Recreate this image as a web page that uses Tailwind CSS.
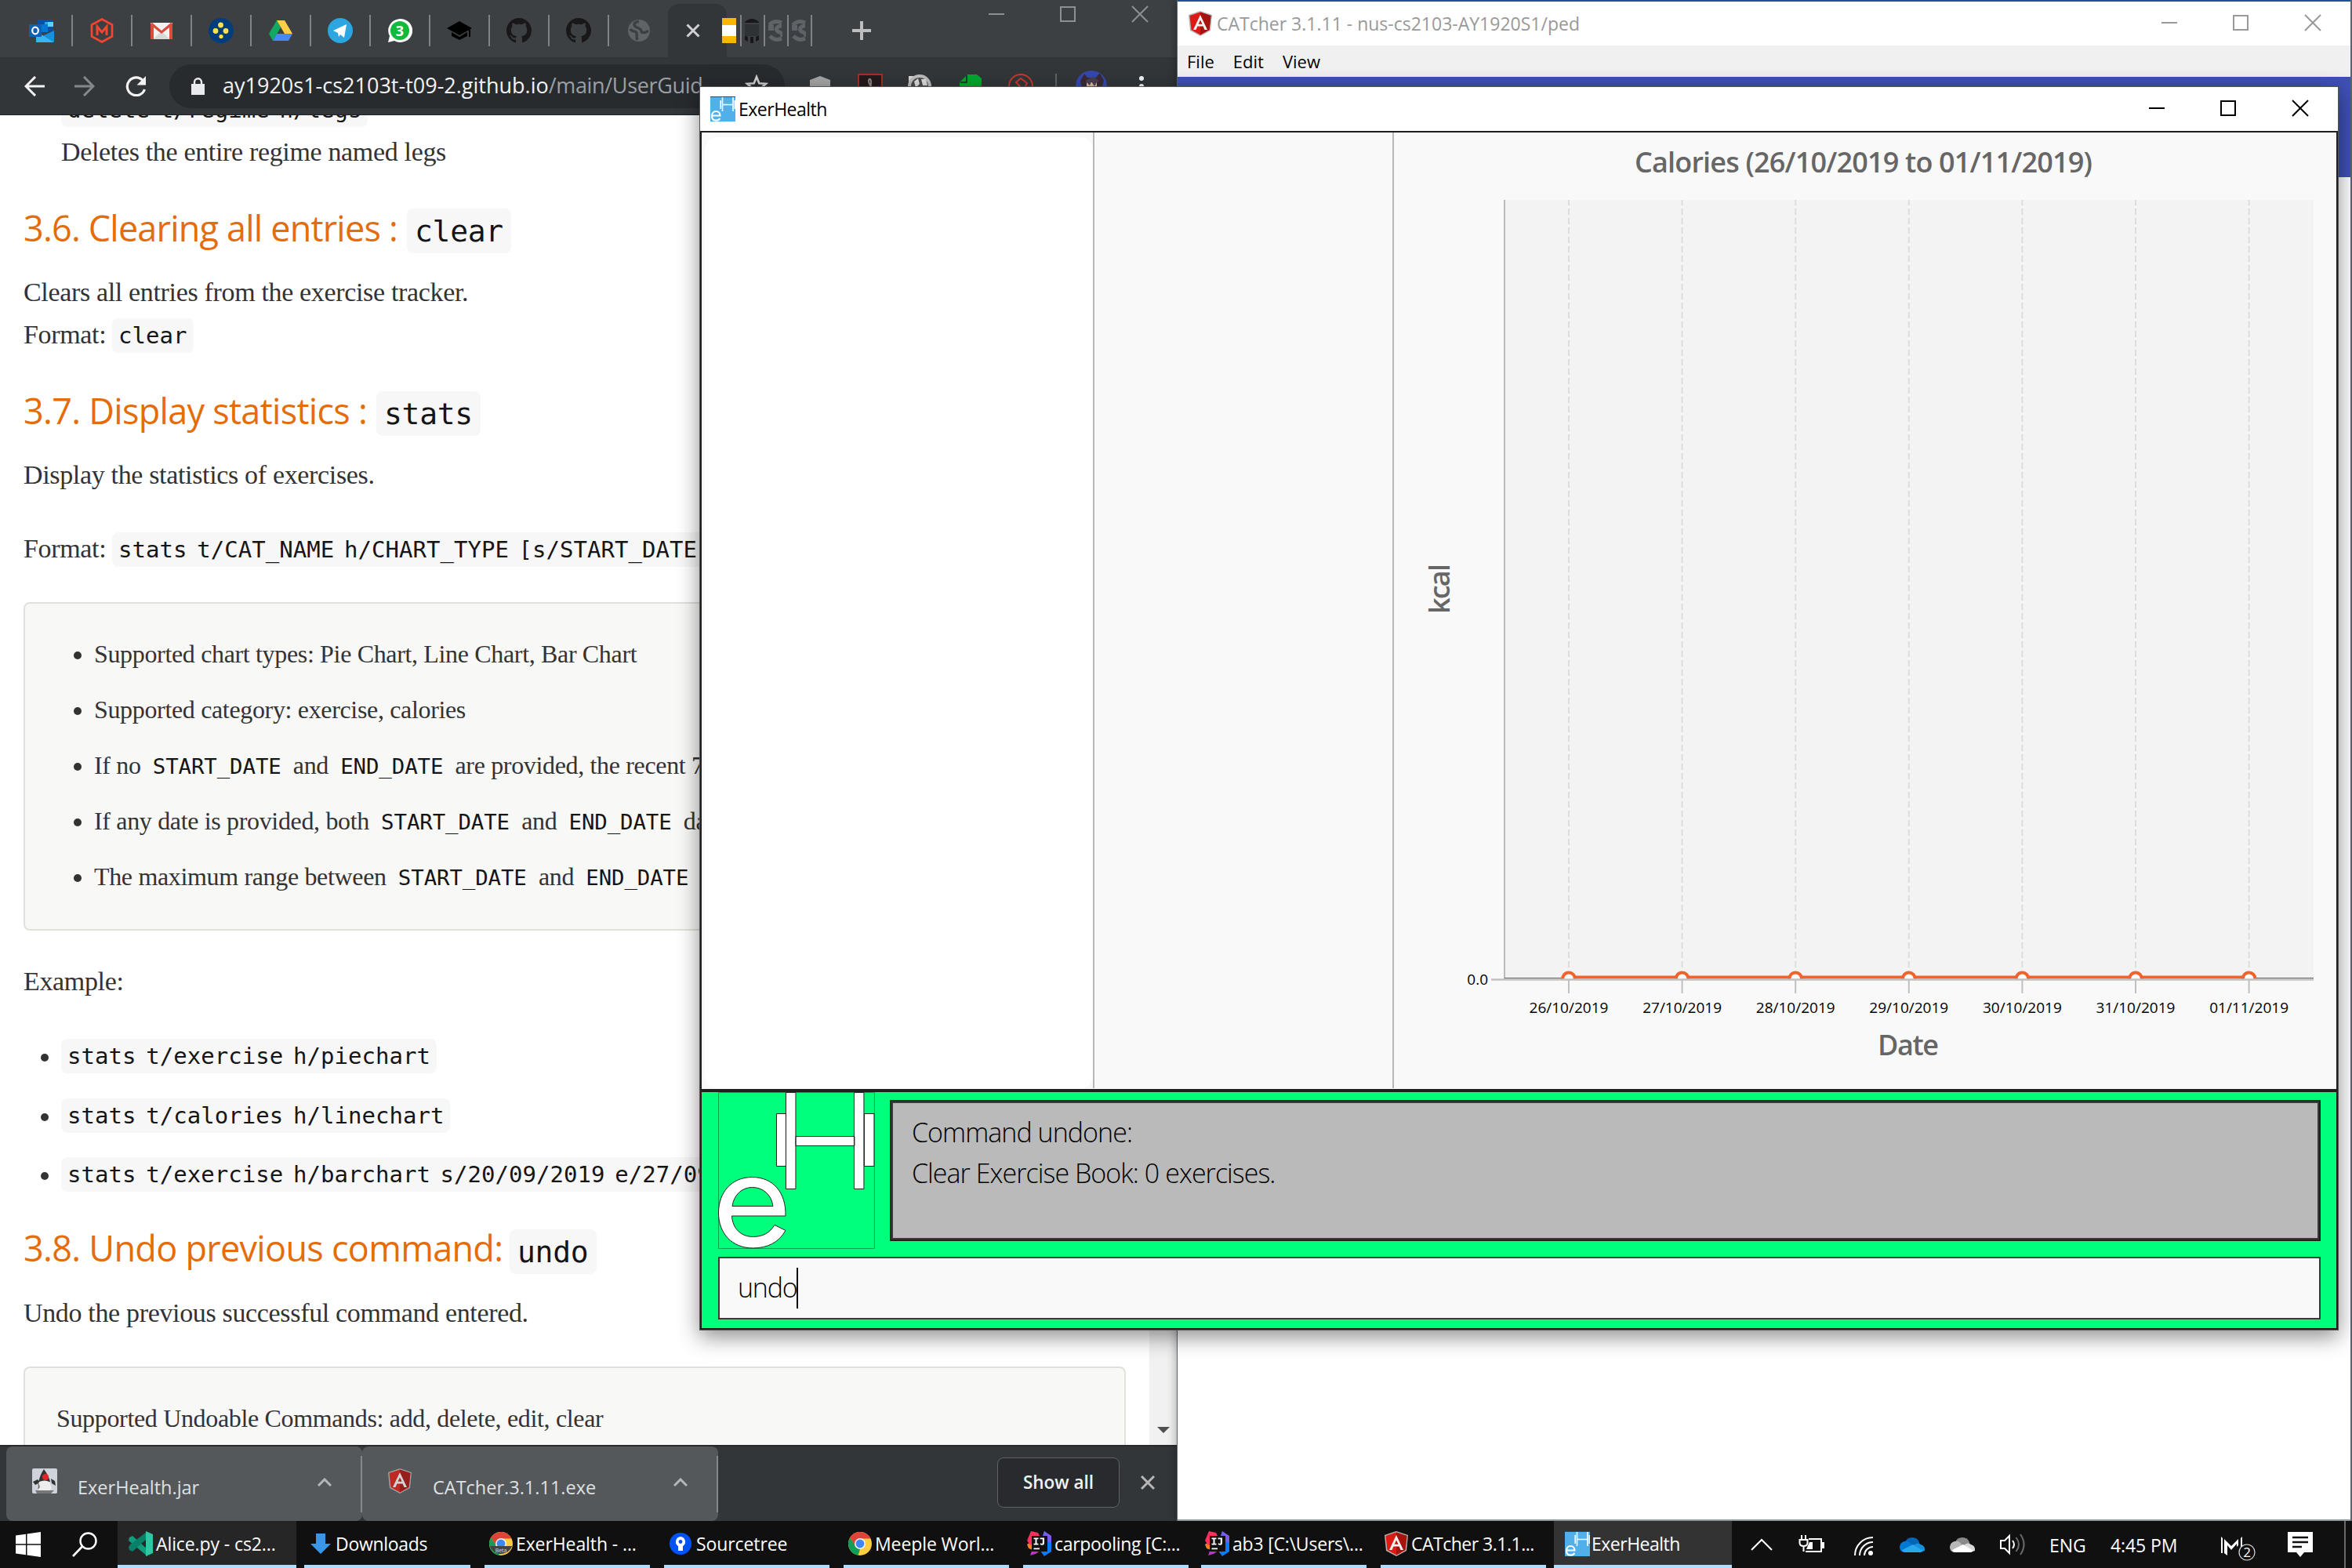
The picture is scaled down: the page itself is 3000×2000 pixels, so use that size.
<!DOCTYPE html>
<html lang="en">
<head>
<meta charset="utf-8">
<title>Desktop</title>
<script src="https://cdn.jsdelivr.net/npm/@tailwindcss/browser@4"></script>
</head>
<body class="relative w-[3000px] h-[2000px] overflow-hidden bg-[#3c4043] font-['Open_Sans',sans-serif] text-[23px] leading-none whitespace-nowrap">

<svg class="hidden">
  <symbol id="angular" viewBox="0 0 32 32"><path fill="#b3b3b3" d="M16 0 31 5 29 25 16 32 3 25 1 5z"/><path fill="#dd1b16" d="M16 1.500 29.500 6 27.500 24 16 30.500 4.500 24 2.500 6z"/><path fill="#a6120d" d="M16 1.500 29.500 6 27.500 24 16 30.500z"/><path fill="#f2f2f2" d="M16 5 7 24h3.500l1.900-4.600h7.200l1.900 4.600H25zm0 6.500 2.500 5.300h-5z"/></symbol>
  <symbol id="github" viewBox="0 0 16 16"><path d="M8 0C3.580 0 0 3.580 0 8c0 3.540 2.290 6.530 5.470 7.590.4.070.55-.17.55-.38 0-.19-.01-.82-.01-1.490-2.010.37-2.530-.49-2.690-.94-.09-.23-.48-.94-.82-1.130-.28-.15-.68-.52-.01-.53.63-.01 1.080.58 1.230.82.72 1.210 1.870.87 2.330.66.070-.52.28-.87.51-1.070-1.780-.2-3.640-.89-3.640-3.950 0-.87.31-1.590.82-2.150-.08-.2-.36-1.020.080-2.120 0 0 .67-.21 2.200.82.64-.18 1.320-.27 2-.27s1.360.09 2 .27c1.530-1.040 2.200-.82 2.200-.82.44 1.100.16 1.920.080 2.120.51.56.82 1.270.82 2.150 0 3.070-1.870 3.750-3.650 3.950.29.25.54.73.54 1.480 0 1.070-.01 1.930-.01 2.200 0 .21.15.46.55.38A8 8 0 0 0 16 8c0-4.420-3.580-8-8-8z"/></symbol>
  <symbol id="globe" viewBox="0 0 28 28"><circle cx="14" cy="14" r="14" fill="#5f6368"/><path fill="none" stroke="#3c4043" stroke-width="3.500" d="M14 2.500c-6 0-7 4-5 6s5 2 7 4 0 4 3 4 6-1 6-3M3 12c2 4 7 2 8 5s-1 5 1 9"/></symbol>
  <symbol id="halfglobe" viewBox="0 0 18 28"><path fill="none" stroke="#5f6368" stroke-width="5" d="M1 7q7-7 16-3M17 8c-5 0-9 4-5 7 4 2 6 2 6 7M2 21q7 7 15 3"/><path fill="#5f6368" d="M0 7h7v7H0z"/></symbol>
  <symbol id="exer" viewBox="0 0 32 32"><path fill="#51b0ea" d="M0 0h32v32H0z"/><path fill="#1d4f70" d="M0 0h32v1H0z"/><path fill="none" stroke="#fff" stroke-width="1.600" d="M15.500 1v18M29 1v18M15.500 10.500H29M13.200 5v11M31.300 5v11"/><path fill="none" stroke="#fff" stroke-width="2.200" d="M2 24.500h10.500c0-3-2-5.500-5.200-5.500S2 21.500 2 25s2 5.700 5.300 5.700c2.300 0 4-1 5-2.700"/></symbol>
  <symbol id="chrome" viewBox="0 0 30 30"><circle cx="15" cy="15" r="15" fill="#ffcd40"/><path fill="#db4437" d="M15 0A15 15 0 0 1 28.500 8.500H15L9 18.500 2.200 7.200A15 15 0 0 1 15 0z"/><path fill="#0f9d58" d="M2.200 7.200 9.300 18.500 15 22l-2.500 7.800A15 15 0 0 1 2.200 7.200z"/><circle cx="15" cy="15" r="7" fill="#f1f1f1"/><circle cx="15" cy="15" r="5.400" fill="#4285f4"/></symbol>
  <symbol id="idea" viewBox="0 0 32 32"><path fill="#fc801d" d="M0 17l6-4 4 12-8-3z"/><path fill="#fe315d" d="M5 0l9 2 4 8L4 18 0 12z"/><path fill="#087cfa" d="M22 0l9 8v18l-9 6-6-8 4-18z"/><path fill="#7b5cf0" d="M22 0l9 6v9l-12-5z"/><path fill="#b735c9" d="M4 31l3-9h14l-10 7z"/><path fill="#111" d="M6 6h20v20H6z"/><path fill="#fff" d="M8.500 8.500h6v1.800h-2v5.400h2v1.800h-6v-1.800h2v-5.400h-2zM16.500 8.500h5.500v7q0 2.200-2.500 2.200-2 0-3-1.200l1.100-1.300q1.700 1.400 2.200 0v-4.900h-3.300zM8.500 21.500H16v1.700H8.500z"/></symbol>
  <symbol id="wincontrols" viewBox="0 0 206 22"><path fill="none" stroke="currentColor" stroke-width="2" d="M1 11h20M93 2h18v18H93zM184 1l20 20M204 1l-20 20"/></symbol>
</svg>

<!-- Browser window -->
<section class="absolute left-0 top-0 w-[1501px] h-[1940px] flex flex-col bg-white overflow-hidden">
  <div class="h-[73px] shrink-0 bg-[#3c4043] flex relative">
    <div class="flex items-center h-[78px] pl-[17px]">
      <div class="w-[76px] h-10 border-r-2 border-[#808386] flex items-center justify-center pr-0.5"><svg class="w-8 h-8" viewBox="0 0 32 32"><path fill="#0a4fa0" d="M11 2h20v15H11z"/><path fill="#28a8ea" d="M20 5h11v6H20z"/><path fill="#50d9ff" d="M24 5h7v6h-7z"/><path fill="#0078d4" d="M14 8h10v10H14z"/><path fill="#1490df" d="M32 16v14H9l10-8z"/><path fill="#35b8f1" d="M9 17l23 14H9z"/><path fill="#0f5fb5" d="M0 8h16v16H0z"/><ellipse cx="8" cy="16" rx="3.800" ry="4.300" fill="none" stroke="#fff" stroke-width="2.200"/></svg></div>
      <div class="w-[76px] h-10 border-r-2 border-[#808386] flex items-center justify-center"><svg class="w-8 h-8" viewBox="0 0 32 32"><path fill="none" stroke="#f8452f" stroke-width="2.600" d="M16 1.500 29 8.500v15L16 30.500 3 23.500v-15z"/><path fill="none" stroke="#f8452f" stroke-width="3" d="M10 22V11l6 7 6-7v11"/></svg></div>
      <div class="w-[76px] h-10 border-r-2 border-[#808386] flex items-center justify-center"><svg class="w-[28px] h-8" viewBox="0 0 28 32"><path fill="#f2f2f2" d="M0 6h28v21H0z"/><path fill="#d8d8d8" d="M3 27 14 17l11 10z"/><path fill="#dc4b3e" d="M0 8q0-2 2-2l12 10L26 6q2 0 2 2v19h-4V12L14 20 4 12v15H0z"/></svg></div>
      <div class="w-[76px] h-10 border-r-2 border-[#808386] flex items-center justify-center"><svg class="w-8 h-8" viewBox="0 0 32 32"><circle cx="16" cy="16" r="16" fill="#003d7c"/><g fill="#ffe14d"><circle cx="15.500" cy="9" r="3.400"/><circle cx="9" cy="16.500" r="3.400"/><circle cx="22" cy="16.500" r="3.400"/><circle cx="16" cy="23.500" r="2.600"/></g></svg></div>
      <div class="w-[76px] h-10 border-r-2 border-[#808386] flex items-center justify-center"><svg class="w-[30px] h-8" viewBox="0 0 30 32"><path fill="#11a861" d="M10 3 0 20l5 9 10-17z"/><path fill="#ffcf48" d="M10 3h10l10 17H20z"/><path fill="#4688f4" d="M10 20h20l-5 9H5z"/></svg></div>
      <div class="w-[76px] h-10 border-r-2 border-[#808386] flex items-center justify-center"><svg class="w-8 h-8" viewBox="0 0 32 32"><circle cx="16" cy="16" r="16" fill="#2ca5e0"/><path fill="#fff" d="M7 16 24 8l-3 17-5-4-2 3-1-5z"/></svg></div>
      <div class="w-[76px] h-10 border-r-2 border-[#808386] flex items-center justify-center relative"><svg class="w-8 h-8" viewBox="0 0 32 32"><path fill="#fff" d="M1 31l2-8a15.500 15 0 1 1 6 6z"/><circle cx="16" cy="16" r="12" fill="#12b93c"/></svg><span class="absolute inset-0 flex items-center justify-center text-white text-[18px] font-bold">3</span></div>
      <div class="w-[76px] h-10 border-r-2 border-[#808386] flex items-center justify-center"><svg class="w-8 h-8" viewBox="0 0 32 32"><path fill="#000" d="M16 4 32 13 16 22 0 13zM6 18l10 6 10-6v5L16 28 6 23zM28 15h2v9h-2z"/></svg></div>
      <div class="w-[76px] h-10 border-r-2 border-[#808386] flex items-center justify-center"><svg class="w-8 h-8 fill-[#191717]"><use href="#github"/></svg></div>
      <div class="w-[76px] h-10 border-r-2 border-[#808386] flex items-center justify-center"><svg class="w-8 h-8 fill-[#191717]"><use href="#github"/></svg></div>
      <div class="w-[75px] h-10 flex items-center justify-center"><svg class="w-7 h-7"><use href="#globe"/></svg></div>
    </div>
    <div class="w-[75px] mt-[5px] h-[68px] bg-[#323639] rounded-t-[14px] flex justify-center"><svg class="w-[18px] h-[18px] mt-[25px] ml-[-12px]" viewBox="0 0 18 18"><path stroke="#cfd1d3" stroke-width="3" d="M1.500 1.500l15 15M16.500 1.500l-15 15"/></svg></div>
    <div class="flex items-center h-[78px] ml-[-6px] gap-[6px]">
      <div class="w-[18px] h-8 bg-[#f9b700] py-[9px]"><div class="h-[14px] bg-white"></div></div><div class="w-0.5 h-10 bg-[#808386] -mx-px mr-[-2px]"></div>
      <svg class="w-[18px] h-8 fill-[#191717]" viewBox="3.500 0 9 16" preserveAspectRatio="none"><path d="M3.500 2.500Q8-1.500 12.500 2.500V3h-9zM3.500 11l2 1v3l-2-1zM7 12h2v4H7zM10.500 12l2-1v3l-2 1z"/><path fill="#2f3235" d="M3.500 4h9v6l-1 1.500h-7l-1-1.500z"/></svg><div class="w-0.5 h-10 bg-[#808386] mr-[-2px]"></div>
      <svg class="w-[18px] h-7"><use href="#halfglobe"/></svg><div class="w-0.5 h-10 bg-[#808386] mr-[-2px]"></div>
      <svg class="w-[18px] h-7"><use href="#halfglobe"/></svg><div class="w-0.5 h-10 bg-[#808386]"></div>
      <svg class="w-6 h-6 ml-[45px]" viewBox="0 0 24 24"><path stroke="#bcbec0" stroke-width="4" d="M12 0v24M0 12h24"/></svg>
    </div>
    <svg class="absolute left-[1260px] top-[7px] w-[206px] h-[22px] text-[#8d9092]"><use href="#wincontrols"/></svg>
  </div>

  <div class="h-[73px] shrink-0 bg-[#323639] flex items-center">
    <svg class="w-[26px] h-[26px] ml-[31px]" viewBox="0 0 26 26"><path fill="none" stroke="#f1f3f4" stroke-width="3" d="M26 13H2M14 1 2 13l12 12"/></svg>
    <svg class="w-[26px] h-[26px] ml-[38px]" viewBox="0 0 26 26"><path fill="none" stroke="#85888b" stroke-width="3" d="M0 13h24M12 1l12 12-12 12"/></svg>
    <svg class="w-[28px] h-[26px] ml-[38px]" viewBox="0 0 28 26"><path fill="none" stroke="#f1f3f4" stroke-width="3.200" d="M23.500 6A11.400 11.400 0 1 0 25.500 17"/><path fill="#f1f3f4" d="M27 0v11.500H15.500z"/></svg>
    <div class="ml-[29px] w-[785px] h-14 rounded-full bg-[#282b2e] flex items-center shrink-0">
      <svg class="w-[17px] h-[22px] ml-[28px]" viewBox="0 0 17 22"><path fill="#e8eaed" d="M0 8h17v14H0z"/><path fill="none" stroke="#e8eaed" stroke-width="2.400" d="M4 9V5.500a4.500 4.200 0 0 1 9 0V9"/></svg>
      <div class="ml-[23px] -mt-0.5 w-[650px] text-[27px] text-[#9aa0a6]"><span class="text-[#f1f3f4]">ay1920s1-cs2103t-t09-2.github.io</span><span class="tracking-[-0.35px]">/main/UserGuid</span></div>
      <svg class="w-[30px] h-[30px] ml-[16px] shrink-0" viewBox="0 0 30 30"><path fill="none" stroke="#cfd1d3" stroke-width="2.600" d="M15 3l3.300 8.200 8.700.6-6.700 5.600 2.200 8.600-7.500-4.700L7.500 26l2.200-8.600L3 11.800l8.700-.6z"/></svg>
    </div>
    <svg class="w-[480px] h-[56px] shrink-0" viewBox="1001 81 480 56"><path fill="#a6a6a6" d="M1033 101l13-5 13 5v18h-26z"/><path fill="#241a1c" stroke="#a3301f" stroke-width="2" d="M1095 94h30v30h-30z"/><path fill="none" stroke="#8b8183" stroke-width="2" d="M1108 114c5-8 3-15 1-14s-1 8 5 12"/><path fill="#d8d8d8" d="M1159 96h18l10 10v10h-28z"/><circle cx="1173" cy="109" r="15" fill="#bdbdbd"/><circle cx="1173" cy="109" r="11" fill="#4a4a4a"/><path fill="#ddd" d="M1166 103l5-4 2 7-5 5zM1175 100h6l2 8h-6z"/><path fill="#00a82d" d="M1224 104l10-10h12l6 5v20h-28z"/><path stroke="#222" stroke-width="1.500" fill="none" d="M1225 104h8v-9"/><circle cx="1302" cy="109" r="15" fill="none" stroke="#c9392b" stroke-width="2"/><path fill="none" stroke="#c9392b" stroke-width="2" d="M1292 116l8-8-4-4 6-5 8 6-4 8M1300 108l6 6"/><path fill="#5f6368" d="M1346 93h2v30h-2z"/><circle cx="1392" cy="109" r="20" fill="#3448ae"/><path fill="#3b2a35" d="M1378 102l5-9 4 5h11l5-6 5 10-6 20h-20z"/><path fill="#e0b9a4" d="M1386 104h13v12h-13z"/><path fill="#4a4150" d="M1384 102l6 6 2-5 4 6 3-5 3-2-8-5z"/><circle cx="1456" cy="99" r="3" fill="#f1f3f4"/><circle cx="1456" cy="109" r="3" fill="#f1f3f4"/></svg>
  </div>

  <div class="h-[1697px] shrink-0 border-t border-[#202124] flex overflow-hidden">
    <article class="w-[1466px] pl-[30px] font-['Liberation_Serif',serif] text-[34px] tracking-[-0.34px] leading-[54px] text-[#333] [&_code]:font-['DejaVu_Sans_Mono',monospace] [&_code]:text-[#151515] overflow-hidden">
      <div class="flex items-center h-[54px] -mt-[35px]"><i class="w-[10px] h-[10px] ml-[22px] mr-4 rounded-full bg-[#333]"></i><code class="h-11 leading-[44px] mt-0.5 px-2 rounded-lg bg-[#f7f7f8] text-[29px] tracking-[0.04px] [word-spacing:-4.8px]">delete t/regime h/legs</code></div>
      <p class="mt-px pl-12">Deletes the entire regime named legs</p>
      <h3 class="flex h-16 leading-[64px] mt-[38px] font-['Open_Sans',sans-serif] text-[45px] tracking-[-0.8px] text-[#e46c0a]"><span class="w-[489px]">3.6. Clearing all entries :</span><code class="mt-[7px] h-[57px] w-[133px] leading-[58px] px-[10px] rounded-lg bg-[#f7f7f8] text-[38px] tracking-[-0.3px]">clear</code></h3>
      <p class="mt-[23px]">Clears all entries from the exercise tracker.</p>
      <p class="flex items-center h-[54px]"><span class="w-[113px]">Format:</span><code class="h-11 leading-[44px] mt-0.5 px-2 rounded-lg bg-[#f7f7f8] text-[29px] tracking-[0.04px]">clear</code></p>
      <h3 class="flex h-16 leading-[64px] mt-[38px] font-['Open_Sans',sans-serif] text-[45px] tracking-[-0.7px] text-[#e46c0a]"><span class="w-[450px]">3.7. Display statistics :</span><code class="mt-[7px] h-[57px] w-[133px] leading-[58px] px-[10px] rounded-lg bg-[#f7f7f8] text-[38px] tracking-[-0.3px]">stats</code></h3>
      <p class="mt-[23px]">Display the statistics of exercises.</p>
      <p class="flex items-center h-[54px] mt-10"><span class="w-[113px]">Format:</span><code class="h-11 leading-[44px] mt-0.5 px-2 rounded-lg bg-[#f7f7f8] text-[29px] tracking-[0.04px] [word-spacing:-4.8px]">stats t/CAT_NAME h/CHART_TYPE [s/START_DATE]</code></p>
      <ul class="mt-[41px] w-[1406px] h-[419px] pt-[39px] pl-[62px] rounded-lg border-2 border-[#e0e0dc] bg-[#f8f8f7] flex flex-col gap-[21px] text-[32px] leading-[50px] [&_code]:text-[27.400px] [&_code]:leading-none [&_code]:tracking-[-0.1px] [&_code]:px-[7.500px] [&_li]:h-[50px] [&_li]:flex [&_li]:items-center [&_i]:size-[10px] [&_i]:mt-1 [&_i]:rounded-full [&_i]:bg-[#333] [&_i]:mr-4">
        <li><i></i><span>Supported chart types: Pie Chart, Line Chart, Bar Chart</span></li>
        <li><i></i><span>Supported category: exercise, calories</span></li>
        <li><i></i><span>If no <code>START_DATE</code> and <code>END_DATE</code> are provided, the recent 7 days</span></li>
        <li><i></i><span>If any date is provided, both <code>START_DATE</code> and <code>END_DATE</code> date</span></li>
        <li><i></i><span>The maximum range between <code>START_DATE</code> and <code>END_DATE</code></span></li>
      </ul>
      <p class="mt-[38px]">Example:</p>
      <ul class="mt-10 flex flex-col gap-[21.500px] [&_li]:flex [&_li]:items-center [&_li]:h-[54px] [&_i]:size-[10px] [&_i]:mt-1.5 [&_i]:ml-[22px] [&_i]:mr-4 [&_i]:rounded-full [&_i]:bg-[#333] [&_code]:h-11 [&_code]:leading-[44px] [&_code]:mt-0.5 [&_code]:px-2 [&_code]:rounded-lg [&_code]:bg-[#f7f7f8] [&_code]:text-[29px] [&_code]:tracking-[0.04px] [&_code]:[word-spacing:-4.8px]">
        <li><i></i><code>stats t/exercise h/piechart</code></li>
        <li><i></i><code>stats t/calories h/linechart</code></li>
        <li><i></i><code>stats t/exercise h/barchart s/20/09/2019 e/27/09/2019</code></li>
      </ul>
      <h3 class="flex h-16 leading-[64px] mt-[36px] font-['Open_Sans',sans-serif] text-[45px] tracking-[-0.7px] text-[#e46c0a]"><span class="w-[620px]">3.8. Undo previous command:</span><code class="mt-[8px] h-[57px] w-[111px] leading-[58px] px-[10px] rounded-lg bg-[#f7f7f8] text-[38px] tracking-[-0.3px]">undo</code></h3>
      <p class="mt-6">Undo the previous successful command entered.</p>
      <div class="mt-[41px] w-[1406px] h-[160px] pt-[39px] pl-10 rounded-lg border-2 border-[#e0e0dc] bg-[#f8f8f7] text-[32px] leading-[50px]">Supported Undoable Commands: add, delete, edit, clear</div>
    </article>
    <div class="w-[35px] bg-[#f1f1f1] flex flex-col justify-end items-center pb-[15px]"><svg class="w-4 h-2" viewBox="0 0 16 8"><path fill="#505050" d="M0 0h16L8 8z"/></svg></div>
  </div>

  <div class="h-[97px] shrink-0 border-t-2 border-[#28292c] bg-[#323639] flex items-center pl-2 text-[#dfe0e1] text-[23.500px]">
    <div class="w-[454px] h-[95px] rounded-lg bg-[#54585a] flex items-center">
      <svg class="w-8 h-8 ml-[33px] -mt-2" viewBox="0 0 32 32"><rect width="32" height="32" rx="2" fill="#cfd4dc"/><path fill="#333" d="M15 1q6 8 8 16l-15 1Q10 8 15 1zM1 17l6-3 3 4-6 3zM24 13l5 3 1 6-5-3z"/><circle cx="17" cy="11" r="4" fill="#e0262b"/><path fill="#ededed" d="M9 17q7-3 13 0l3 8-4 5H9l-3-6z"/><path fill="#777" d="M4 28h24l-4 4H6zM8 17l2 7-3 3z"/></svg>
      <span class="ml-[26px] mt-2.5">ExerHealth.jar</span>
      <svg class="w-[18px] h-[11px] ml-auto mr-[37px] -mt-1" viewBox="0 0 18 11"><path fill="none" stroke="#b4b6b8" stroke-width="3" d="M1 10l8-8 8 8"/></svg>
      <i class="w-0.5 h-[72px] bg-[#85888a]"></i>
    </div>
    <div class="w-[454px] h-[95px] rounded-lg bg-[#54585a] flex items-center">
      <svg class="w-8 h-8 ml-8 -mt-2 opacity-80"><use href="#angular"/></svg>
      <span class="ml-[26px] mt-2.5">CATcher.3.1.11.exe</span>
      <svg class="w-[18px] h-[11px] ml-auto mr-[37px] -mt-1" viewBox="0 0 18 11"><path fill="none" stroke="#b4b6b8" stroke-width="3" d="M1 10l8-8 8 8"/></svg>
      <i class="w-0.5 h-[72px] bg-[#85888a]"></i>
    </div>
    <div class="ml-[356px] -mt-[3px] w-[156px] h-16 rounded-lg border border-[#5f6368] bg-[#292a2d] flex items-center justify-center font-semibold text-[#f1f3f4] text-[22.500px]">Show all</div>
    <svg class="w-[18px] h-[18px] ml-[27px] -mt-[3px]" viewBox="0 0 18 18"><path stroke="#b4b6b8" stroke-width="3" d="M1 1l16 16M17 1 1 17"/></svg>
  </div>
</section>

<!-- CATcher window -->
<section class="absolute left-[1501px] top-0 w-[1499px] h-[1940px] flex flex-col bg-white border-l border-r-2 border-[#5a6470] shadow-[0_0_12px_rgba(0,0,0,0.35)]">
  <div class="h-[58px] shrink-0 border-t-2 border-[#1c5391] flex items-center text-[#999]">
    <svg class="w-8 h-8 ml-[13px] -mt-px"><use href="#angular"/></svg>
    <span class="ml-[5px]">CATcher 3.1.11 - nus-cs2103-AY1920S1/ped</span>
    <svg class="w-[206px] h-[22px] ml-auto mr-[36px] -mt-0.5"><use href="#wincontrols"/></svg>
  </div>
  <div class="h-10 shrink-0 bg-[#f0f0f0] flex items-center pl-[12px] gap-6 text-black text-[22px]"><span>File</span><span>Edit</span><span>View</span></div>
  <div class="h-[128px] shrink-0 bg-[#3f51b5]"></div>
  <div class="grow bg-white border-b-2 border-[#8a98a0]"></div>
</section>

<!-- ExerHealth window -->
<section class="absolute left-[892px] top-[110px] w-[2091px] h-[1587px] flex flex-col border border-[#555] bg-[#f9f9f9] shadow-[0_8px_26px_rgba(0,0,0,0.45)]">
  <div class="h-14 shrink-0 bg-white flex items-center text-black">
    <svg class="w-8 h-8 ml-[13px] -mt-px"><use href="#exer"/></svg>
    <span class="ml-1 tracking-[-0.5px]">ExerHealth</span>
    <svg class="w-[206px] h-[22px] ml-auto mr-[36px] -mt-0.5"><use href="#wincontrols"/></svg>
  </div>
  <div class="grow border-2 border-[#1f1f1f] flex flex-col">
    <div class="h-[1221px] shrink-0 flex">
      <div class="w-[501px] h-[1219px] pl-1 pt-1.5 border-r-2 border-[#b8b8b8]"><div class="h-[1213px] bg-white rounded-[16px]"></div></div>
      <div class="w-[382px] h-[1219px] border-r-2 border-[#b8b8b8]"></div>
      <svg class="w-[1202px] h-[1221px]" viewBox="1778 169 1202 1221" font-family="'Open Sans', sans-serif">
        <rect x="1919" y="255" width="1032" height="993" fill="#f3f3f3"/>
        <g id="grid" stroke="#dcdcdc" stroke-width="2" stroke-dasharray="8 4"></g>
        <path stroke="#bbb" stroke-width="2" d="M1919 255v994"/>
        <path stroke="#666" d="M1919 1247.500h1032"/>
        <path stroke="#f3622d" stroke-width="4" d="M2001 1246.500h867"/>
        <g id="marks" fill="#fff" stroke="#f3622d" stroke-width="4"></g>
        <path stroke="#c0c0c0" stroke-width="2.500" d="M1902 1249.500h1049"/>
        <g id="ticks" stroke="#c0c0c0" stroke-width="2"></g>
        <g id="labels" font-size="19" text-anchor="middle" fill="#000"></g>
        <text x="1898" y="1256" font-size="19" text-anchor="end">0.0</text>
        <g font-weight="600" fill="#666" text-anchor="middle" font-size="36">
          <text x="2377" y="220" textLength="584">Calories (26/10/2019 to 01/11/2019)</text>
          <text x="2434" y="1346" textLength="78">Date</text>
          <text transform="translate(1849 751) rotate(-90)" textLength="64">kcal</text>
        </g>
      </svg>
    </div>
    <div class="h-1 shrink-0 -mt-px bg-[#1f1f1f]"></div>
    <div class="grow bg-[#00ff7a] pl-[21px] pr-[20px]">
      <div class="flex">
        <svg class="w-[200px] h-[200px]" viewBox="916 1394 200 200"><path fill="none" stroke="#00a050" stroke-width="1" d="M916.500 1394.500h199v199h-199z"/><g fill="#fff" stroke="#222" stroke-width="1"><path d="M990.500 1421.500h12v67h-12zM1102.500 1421.500h12.500v67h-12.500zM1015 1450.500h75v12h-75zM1002.500 1394.500h12.500v123h-12.500zM1089.500 1394.500h12.500v123h-12.500z"/><path d="M933.500 1552h68.500C1003 1522 986 1502.500 959.500 1502.500S916.500 1522 916.500 1548s17 45 44 45c18 0 33-7 41.500-22.500l-14-7c-6 10-15 15-27.500 15-15 0-26-10-27-26.500zM934 1539.500c2-14 12-24 25.500-24s24.500 9 26.500 24z"/></g></svg>
        <div class="ml-[19px] mt-[10px] w-[1826px] h-[180px] border-2 border-[#1f1f1f]"><div class="h-full border-2 border-[#3a3a3a] bg-[#bababa] pl-[24px] pt-[11px] text-[34px] leading-[52px] tracking-[-0.95px] font-light text-black"><p>Command undone:</p><p>Clear Exercise Book: 0 exercises.</p></div></div>
      </div>
      <div class="mt-[10px] h-20 border-2 border-[#3a3a3a] bg-[#f9f9f9] flex items-center pl-[23px] text-[34px] tracking-[-1.2px] font-light text-black"><span class="w-[75px] -mt-0.5">undo</span><i class="w-0.5 h-[52px] bg-black"></i></div>
    </div>
  </div>
</section>

<!-- Taskbar -->
<footer class="absolute left-0 top-[1940px] w-[3000px] h-[60px] bg-[#101010] flex items-stretch text-white tracking-[-0.1px] overflow-hidden [&>*]:shrink-0 [&>div]:flex [&>div]:items-center [&>div]:border-b-4 [&>div]:border-[#b0dcff] [&>div]:pt-0.5">
  <svg class="w-8 h-8 mt-[14px] ml-5" viewBox="0 0 32 32"><path fill="#fff" d="M0 4.500 13 2.700V15.300H0zM14.500 2.500 32 0v15.300H14.500zM0 16.700h13v12.600L0 27.500zM14.500 16.700H32V32l-17.500-2.500z"/></svg>
  <svg class="w-8 h-8 mt-[14px] ml-10 mr-[26px]" viewBox="0 0 32 32"><circle cx="20.500" cy="11.500" r="10" fill="none" stroke="#fff" stroke-width="2.400"/><path stroke="#fff" stroke-width="2.600" d="M13 18.500 1 31"/></svg>
  <div class="w-[228px] bg-[#262626] pl-[13px]"><svg class="w-8 h-8" viewBox="0 0 32 32"><path fill="#0f9d7e" d="M2 8l4-2 19 17v9L1 12z"/><path fill="#0b8068" d="M1 20l2-3L24 1v9L6 26l-4-2z"/><path fill="#2fc6a4" d="M23 0l9 4v24l-9 4z"/></svg><span class="ml-[4px]">Alice.py - cs2...</span></div>
  <div class="w-[212px] ml-2.5 pl-2"><svg class="w-[26px] h-[26px]" viewBox="0 0 26 26"><path fill="#3a97e8" d="M7 0h12v13h7L13 26 0 13h7z"/></svg><span class="ml-1.5 tracking-[-0.3px]">Downloads</span></div>
  <div class="w-[211px] ml-[18px] pl-1.5"><svg class="w-[30px] h-[30px]" viewBox="0 0 30 30"><use href="#chrome"/><path fill="#444" d="M.8 18h28.400A15 15 0 0 1 .8 18z"/><text x="15" y="26" font-size="7" fill="#ddd" text-anchor="middle">Beta</text></svg><span class="ml-1">ExerHealth - ...</span></div>
  <div class="w-[211px] ml-[18px] pl-[7px]"><svg class="w-[28px] h-[28px]" viewBox="0 0 28 28"><circle cx="14" cy="14" r="14" fill="#0052f5"/><path fill="#fff" d="M14 5a6.500 6.500 0 0 1 3 12v6h-6v-6a6.500 6.500 0 0 1 3-12z"/><circle cx="14" cy="11.500" r="2.400" fill="#0052f5"/></svg><span class="ml-1.5">Sourcetree</span></div>
  <div class="w-[211px] ml-[18px] pl-1.5"><svg class="w-[30px] h-[30px]"><use href="#chrome"/></svg><span class="ml-1">Meeple Worl...</span></div>
  <div class="w-[211px] ml-[18px] pl-[5px]"><svg class="w-8 h-8"><use href="#idea"/></svg><span class="ml-[3px] tracking-[-0.3px]">carpooling [C:...</span></div>
  <div class="w-[211px] ml-4 pl-[5px]"><svg class="w-8 h-8"><use href="#idea"/></svg><span class="ml-[3px] tracking-[-0.2px]">ab3 [C:\Users\...</span></div>
  <div class="w-[211px] ml-[18px] pl-1"><svg class="w-8 h-8"><use href="#angular"/></svg><span class="ml-[3px] tracking-[-0.5px]">CATcher 3.1.1...</span></div>
  <div class="w-[227px] ml-2.5 pl-3.5 bg-[#333]"><svg class="w-8 h-8"><use href="#exer"/></svg><span class="ml-[2px] tracking-[-0.5px]">ExerHealth</span></div>
  <svg class="w-[405px] h-[60px]" viewBox="2209 1940 405 60">
    <g fill="none" stroke="#fff" stroke-width="2"><path d="M2234 1977l13-13 13 13M2307 1963h16v16h-20M2298 1958v6M2303 1958v6M2295.500 1964h10v4q0 4-5 4t-5-4zM2300.500 1972v7"/><path stroke-width="3" d="M2325.500 1967v8"/><path d="M2366 1984a23 23 0 0 1 23-23M2372 1984a17 17 0 0 1 17-17M2378 1984a11 11 0 0 1 11-11"/></g>
    <path fill="#fff" d="M2304 1976l4-9h4v9z"/><circle cx="2386" cy="1981" r="3" fill="#fff"/>
    <path fill="#0364b8" d="M2430 1967a9.500 9 0 0 1 18 0l1 6h-20z"/><path fill="#0078d4" d="M2429 1966a8 8 0 0 1 9 4l8 4-18 6a7 7 0 0 1-5-7 8 8 0 0 1 6-7z"/><path fill="#1490df" d="M2440 1972q5-6 10-2 6 2 5 8l-6 2z"/><path fill="#28a8ea" d="M2426 1977l14-7 13 8q-2 2-4 2h-19q-3 0-4-3z"/>
    <path fill="#8a8a8a" d="M2494 1967a9.500 9 0 0 1 18 0l1 6h-20z"/><path fill="#b8b8b8" d="M2493 1966a8 8 0 0 1 9 4l8 4-18 6a7 7 0 0 1-5-7 8 8 0 0 1 6-7z"/><path fill="#d8d8d8" d="M2504 1972q5-6 10-2 6 2 5 8l-6 2z"/><path fill="#fff" d="M2490 1977l14-7 13 8q-2 2-4 2h-19q-3 0-4-3z"/>
    <path fill="none" stroke="#fff" stroke-width="2" d="M2552 1965h5l6-6v22l-6-6h-5zM2567 1965q4 5 0 10"/><path fill="none" stroke="#6a6a6a" stroke-width="2" d="M2571.500 1961q7 9 0 18M2577 1957q9 13 0 26"/>
  </svg>
  <span class="self-center w-[78px] mt-0.5">ENG</span>
  <span class="self-center w-[84px] mt-0.5">4:45 PM</span>
  <svg class="w-[224px] h-[60px]" viewBox="2776 1940 224 60"><path fill="#fff" d="M2833 1960l2 2v19h-2zM2858 1962l2-2v15h-2zM2837 1981v-18l9 9 9-9v8l-2 2v-4l-7 8-5-6v13z"/><circle cx="2866" cy="1980" r="10" fill="#101010" stroke="#ddd" stroke-width="1.200"/><text x="2866" y="1986" font-size="17" fill="#fff" text-anchor="middle">2</text><path fill="#fff" d="M2918 1954h32v26h-11l-5 6-5-6h-11z"/><path stroke="#101010" stroke-width="2.500" d="M2924 1961h20M2924 1967h20M2924 1973h12"/><path stroke="#6a6a6a" stroke-width="2" d="M2991 1940v60"/></svg>
</footer>

<script>
const xs = [2001, 2145.6, 2290.2, 2434.8, 2579.4, 2724, 2868.6];
const days = ['26/10/2019','27/10/2019','28/10/2019','29/10/2019','30/10/2019','31/10/2019','01/11/2019'];
const put = (id, f) => document.getElementById(id).innerHTML = xs.map(f).join('');
put('grid', x => `<path d="M${x} 1234V255"/>`);
put('marks', x => `<path d="M${x - 8} 1249a8 8.500 0 0 1 16 0"/>`);
put('ticks', x => `<path d="M${x} 1250v17"/>`);
put('labels', (x, i) => `<text x="${x}" y="1292">${days[i]}</text>`);
</script>
</body>
</html>
